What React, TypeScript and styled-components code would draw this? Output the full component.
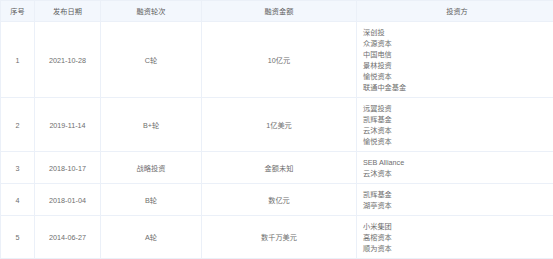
import React from 'react';
import styled, { createGlobalStyle } from 'styled-components';

const GlobalStyle = createGlobalStyle`
  html, body {
    margin: 0;
    padding: 0;
    background: #ffffff;
  }
`;

const Table = styled.table`
  width: 552px;
  border-collapse: collapse;
  table-layout: fixed;
  font-family: 'Liberation Sans', 'Noto Sans CJK SC', sans-serif;
  font-size: 7.2px;
  line-height: 11px;
  color: #6e6e6e;
`;

const HeadCell = styled.th<{ $w: number }>`
  width: ${p => p.$w}px;
  background: #f3f7fd;
  border: 1px solid #ebf0f8;
  padding: 5px 0 4px;
  font-weight: normal;
  color: #5e5e5e;
  text-align: center;
`;

const Cell = styled.td<{ $left?: boolean }>`
  border: 1px solid #ebf0f8;
  padding: 5px ${p => (p.$left ? '6px' : '0')} 4px;
  text-align: ${p => (p.$left ? 'left' : 'center')};
  vertical-align: middle;
`;

const Line = styled.div`
  white-space: nowrap;
`;

const columns = [
  { title: '序号', w: 33 },
  { title: '发布日期', w: 65 },
  { title: '融资轮次', w: 100 },
  { title: '融资金额', w: 154 },
  { title: '投资方', w: 200 },
];

const rows = [
  { no: 1, date: '2021-10-28', round: 'C轮', amount: '10亿元', investors: ['深创投', '众源资本', '中国电信', '景林投资', '愉悦资本', '联通中金基金'] },
  { no: 2, date: '2019-11-14', round: 'B+轮', amount: '1亿美元', investors: ['远翼投资', '凯辉基金', '云沐资本', '愉悦资本'] },
  { no: 3, date: '2018-10-17', round: '战略投资', amount: '金额未知', investors: ['SEB Alliance', '云沐资本'] },
  { no: 4, date: '2018-01-04', round: 'B轮', amount: '数亿元', investors: ['凯辉基金', '湖亭资本'] },
  { no: 5, date: '2014-06-27', round: 'A轮', amount: '数千万美元', investors: ['小米集团', '高榕资本', '顺为资本'] },
];

const App: React.FC = () => (
  <>
    <GlobalStyle />
    <Table>
      <thead>
        <tr>
          {columns.map(c => (
            <HeadCell key={c.title} $w={c.w}>{c.title}</HeadCell>
          ))}
        </tr>
      </thead>
      <tbody>
        {rows.map(r => (
          <tr key={r.no}>
            <Cell>{r.no}</Cell>
            <Cell>{r.date}</Cell>
            <Cell>{r.round}</Cell>
            <Cell>{r.amount}</Cell>
            <Cell $left>
              {r.investors.map(name => (
                <Line key={name}>{name}</Line>
              ))}
            </Cell>
          </tr>
        ))}
      </tbody>
    </Table>
  </>
);

export default App;
